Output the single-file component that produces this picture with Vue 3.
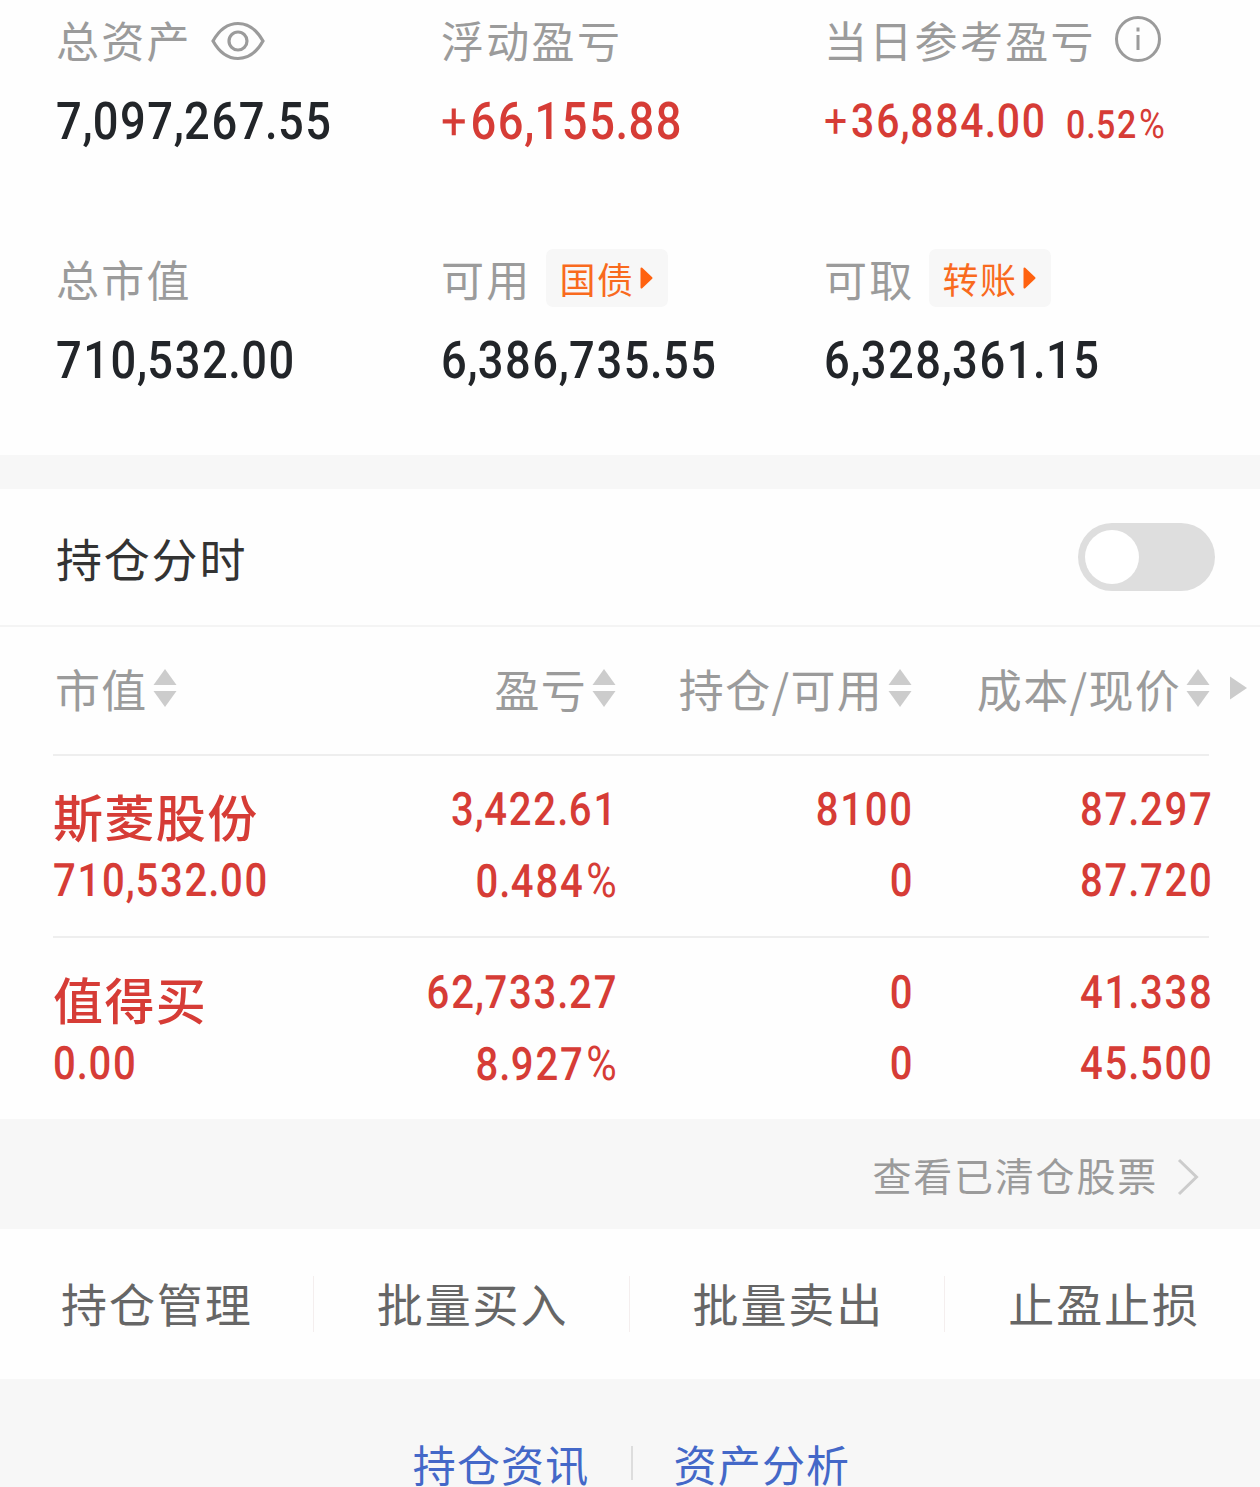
<template>
  <div class="page">
    <section class="summary">
      <div v-for="item in summary" :key="item.label" class="summary-cell">
        <div class="summary-label">
          <span class="label-text">{{ item.label }}</span>
          <svg v-if="item.icon === 'eye'" class="eye-icon" viewBox="0 0 54 40">
            <path d="M2 20C9 7.500 17.500 2.500 27 2.500S45 7.500 52 20C45 32.500 36.500 37.500 27 37.500S9 32.500 2 20Z" />
            <circle cx="27" cy="20" r="9" />
          </svg>
          <svg v-if="item.icon === 'info'" class="info-icon" viewBox="0 0 48 48">
            <circle cx="24" cy="24" r="21.5" />
            <path d="M24 20V35" />
            <path d="M24 12.5V16.5" />
          </svg>
          <button v-if="item.action" class="tag">
            <span class="tag-text">{{ item.action }}</span>
            <svg class="tag-arrow" viewBox="0 0 13 22">
              <path d="M1.5 1.5L11.5 11L1.5 20.5Z" />
            </svg>
          </button>
        </div>
        <div class="summary-value" :class="{ up: item.up, small: item.rate }">
          <span class="num"><i v-for="(p, k) in split(item.value)" :key="k" :class="p.type">{{ p.text }}</i></span>
          <span v-if="item.rate" class="num rate"><i v-for="(p, k) in split(item.rate)" :key="k" :class="p.type">{{ p.text }}</i></span>
        </div>
      </div>
    </section>

    <section class="switch-row">
      <span>持仓分时</span>
      <button class="switch" :class="{ on: showChart }" @click="showChart = !showChart">
        <i class="switch-dot"></i>
      </button>
    </section>

    <section class="holdings">
      <div class="grid table-head">
        <div v-for="col in columns" :key="col" class="head-cell">
          <span>{{ col }}</span>
          <svg class="sort-icon" viewBox="0 0 24 40">
            <path d="M12 1L23.5 17H0.5Z" />
            <path d="M12 39L23.5 23H0.5Z" />
          </svg>
        </div>
        <svg class="more-icon" viewBox="0 0 17 24">
          <path d="M0 0.5L17 12L0 23.5Z" />
        </svg>
      </div>
      <div v-for="stock in stocks" :key="stock.name" class="grid stock">
        <div class="stock-cell">
          <span class="stock-name">{{ stock.name }}</span>
          <span class="num"><i v-for="(p, k) in split(stock.market)" :key="k" :class="p.type">{{ p.text }}</i></span>
        </div>
        <div v-for="(pair, idx) in stock.cells" :key="idx" class="stock-cell">
          <span v-for="(text, row) in pair" :key="row" class="num"><i v-for="(p, k) in split(text)" :key="k" :class="p.type">{{ p.text }}</i></span>
        </div>
      </div>
    </section>

    <div class="cleared">
      <span>查看已清仓股票</span>
      <svg class="chevron" viewBox="0 0 22 40">
        <path d="M2 3L19.5 20L2 37" />
      </svg>
    </div>

    <nav class="actions">
      <div v-for="name in actions" :key="name" class="action">{{ name }}</div>
    </nav>

    <footer class="links">
      <a>持仓资讯</a>
      <i class="links-line"></i>
      <a>资产分析</a>
    </footer>
  </div>
</template>

<script setup>
import { ref } from "vue";

const showChart = ref(false);

const summary = [
  { label: "总资产", value: "7,097,267.55", icon: "eye" },
  { label: "浮动盈亏", value: "+66,155.88", up: true },
  { label: "当日参考盈亏", value: "+36,884.00", rate: "0.52%", up: true, icon: "info" },
  { label: "总市值", value: "710,532.00" },
  { label: "可用", value: "6,386,735.55", action: "国债" },
  { label: "可取", value: "6,328,361.15", action: "转账" },
];

const columns = ["市值", "盈亏", "持仓/可用", "成本/现价"];

// cells: 每列上下两行
const stocks = [
  {
    name: "斯菱股份",
    market: "710,532.00",
    cells: [
      ["3,422.61", "0.484%"],
      ["8100", "0"],
      ["87.297", "87.720"],
    ],
  },
  {
    name: "值得买",
    market: "0.00",
    cells: [
      ["62,733.27", "8.927%"],
      ["0", "0"],
      ["41.338", "45.500"],
    ],
  },
];

const actions = ["持仓管理", "批量买入", "批量卖出", "止盈止损"];

const types = { ",": "sep", ".": "sep", "+": "plus", "%": "percent" };

// 标点和符号比数字窄，拆开单独设置样式
const split = (value) =>
  value.match(/\d+|\D/g).map((text) => ({ text, type: types[text] || "digits" }));
</script>

<style>
html,
body {
  margin: 0;
  overflow: hidden;
}
</style>

<style scoped>
.page {
  width: 1260px;
  height: 1487px;
  overflow: hidden;
  background: #fefefe;
  font-family: "Noto Sans CJK SC", sans-serif;
  color: #222529;
  white-space: nowrap;
}

button {
  border: none;
  padding: 0;
  font: inherit;
}

svg {
  display: block;
  flex: none;
}

/* 窄体数字 */
.num {
  display: inline-block;
  font-family: Roboto, sans-serif;
  font-weight: 500;
  letter-spacing: 0.045em;
  text-rendering: geometricPrecision;
  transform: scaleX(0.87);
  transform-origin: left center;
}

.num i {
  font-style: normal;
}

.sep {
  margin-right: -0.03em;
  margin-left: -0.02em;
}

.plus {
  margin-right: 0.05em;
  font-weight: 400;
}

.percent {
  margin-left: 0.04em;
  font-weight: 400;
  font-size: 1.04em;
}

.summary {
  display: grid;
  grid-template-columns: 385px 383px 1fr;
  grid-template-rows: 239px 216px;
  box-sizing: border-box;
  height: 455px;
  padding-left: 56px;
}

.summary-label {
  display: flex;
  align-items: center;
  height: 78px;
  font-size: 43px;
  letter-spacing: 2.3px;
  color: #9b9b9b;
}

.label-text {
  padding-bottom: 1px;
}

.eye-icon {
  width: 54px;
  height: 40px;
  margin-left: 19px;
  margin-top: 3px;
  fill: none;
  stroke: #9b9b9b;
  stroke-width: 3.2;
}

.info-icon {
  width: 48px;
  height: 48px;
  margin-left: 18px;
  fill: none;
  stroke: #9b9b9b;
  stroke-width: 3;
}

.tag {
  display: flex;
  align-items: center;
  box-sizing: border-box;
  width: 122px;
  height: 58px;
  margin-left: 14px;
  padding-left: 14px;
  border-radius: 7px;
  background: #f7f7f7;
  color: #f96a1e;
  font-size: 36px;
  letter-spacing: 1.5px;
}

.tag-text {
  padding-bottom: 1px;
}

.tag-arrow {
  width: 13px;
  height: 22px;
  margin-left: 5px;
  margin-bottom: 1px;
  fill: #ff6210;
  stroke: #ff6210;
  stroke-width: 2;
  stroke-linejoin: round;
}

.summary-value {
  display: flex;
  height: 87px;
  line-height: 87px;
  font-size: 52px;
}

.summary-value .num {
  letter-spacing: 0.035em;
}

.summary-value.small .num {
  letter-spacing: 0.045em;
}

.up {
  color: #d63c36;
}

.small {
  font-size: 47px;
}

.rate {
  margin-left: -14px;
  padding-top: 3px;
  font-size: 39px;
}

.switch-row {
  display: flex;
  align-items: center;
  justify-content: space-between;
  box-sizing: border-box;
  height: 172px;
  padding: 0 45px 0 56px;
  border-top: 34px solid #f7f7f7;
  border-bottom: 2px solid #f4f4f4;
  font-size: 46px;
  letter-spacing: 1.8px;
  color: #333;
}

.switch {
  display: flex;
  align-items: center;
  width: 137px;
  height: 68px;
  padding: 0 7px;
  box-sizing: border-box;
  border-radius: 34px;
  background: #dedede;
}

.switch.on {
  justify-content: flex-end;
  background: #d63c36;
}

.switch-dot {
  width: 54px;
  height: 54px;
  border-radius: 50%;
  background: #fff;
}

.holdings {
  height: 492px;
}

.grid {
  display: grid;
  grid-template-columns: 263px 300px 296px 300px 48px;
  margin-left: 53px;
}

.table-head {
  align-items: center;
  box-sizing: border-box;
  height: 127px;
  padding-bottom: 5px;
  color: #9b9b9b;
  font-size: 45px;
  letter-spacing: 1.3px;
}

.head-cell {
  display: flex;
  align-items: center;
  justify-content: flex-end;
}

.head-cell:first-child {
  justify-content: flex-start;
  padding-left: 2px;
}

.head-cell:nth-child(4) {
  padding-right: 2px;
}

.sort-icon {
  width: 24px;
  height: 40px;
  margin-left: 5px;
  fill: #ccc;
}

.more-icon {
  width: 17px;
  height: 24px;
  margin-left: 18px;
  fill: #ccc;
}

.stock {
  position: relative;
  height: 182px;
  color: #d63c36;
  font-size: 46px;
}

.stock + .stock {
  height: 183px;
}

.stock::before {
  content: "";
  position: absolute;
  top: 0;
  left: 0;
  width: 1156px;
  height: 2px;
  background: #eee;
}

.stock-cell {
  display: flex;
  flex-direction: column;
  align-items: flex-end;
  padding-top: 21px;
  line-height: 71px;
}

.stock + .stock .stock-cell {
  padding-top: 22px;
}

.stock-cell .num {
  height: 71px;
  transform-origin: right center;
  margin-right: -2px;
}

.stock-cell:first-child {
  align-items: flex-start;
}

.stock-cell:first-child .num {
  transform-origin: left center;
}

.stock-name {
  height: 71px;
  line-height: 81px;
  font-size: 50px;
  font-weight: 500;
  letter-spacing: 1.4px;
}

.cleared {
  display: flex;
  align-items: center;
  justify-content: flex-end;
  height: 110px;
  padding-right: 61px;
  background: #f7f7f7;
  color: #9b9b9b;
  font-size: 39px;
  letter-spacing: 1.8px;
}

.chevron {
  width: 22px;
  height: 40px;
  margin-left: 19px;
  margin-top: 5px;
  fill: none;
  stroke: #ccc;
  stroke-width: 3;
}

.actions {
  display: flex;
  align-items: center;
  height: 150px;
}

.action {
  flex: 1;
  box-sizing: border-box;
  height: 56px;
  line-height: 53px;
  padding-left: 1px;
  text-align: center;
  font-size: 46px;
  letter-spacing: 1.9px;
  color: #666;
}

.action + .action {
  padding-left: 3px;
  border-left: 1px solid #f4eeee;
}

.links {
  display: flex;
  justify-content: center;
  align-items: flex-start;
  box-sizing: border-box;
  height: 108px;
  padding-top: 59px;
  padding-left: 3px;
  background: #f7f7f7;
  color: #4468c8;
  font-size: 43px;
  line-height: 50px;
  letter-spacing: 1.2px;
}

.links-line {
  width: 2px;
  height: 34px;
  margin: 8px 41px 0;
  background: #ddd;
}
</style>
